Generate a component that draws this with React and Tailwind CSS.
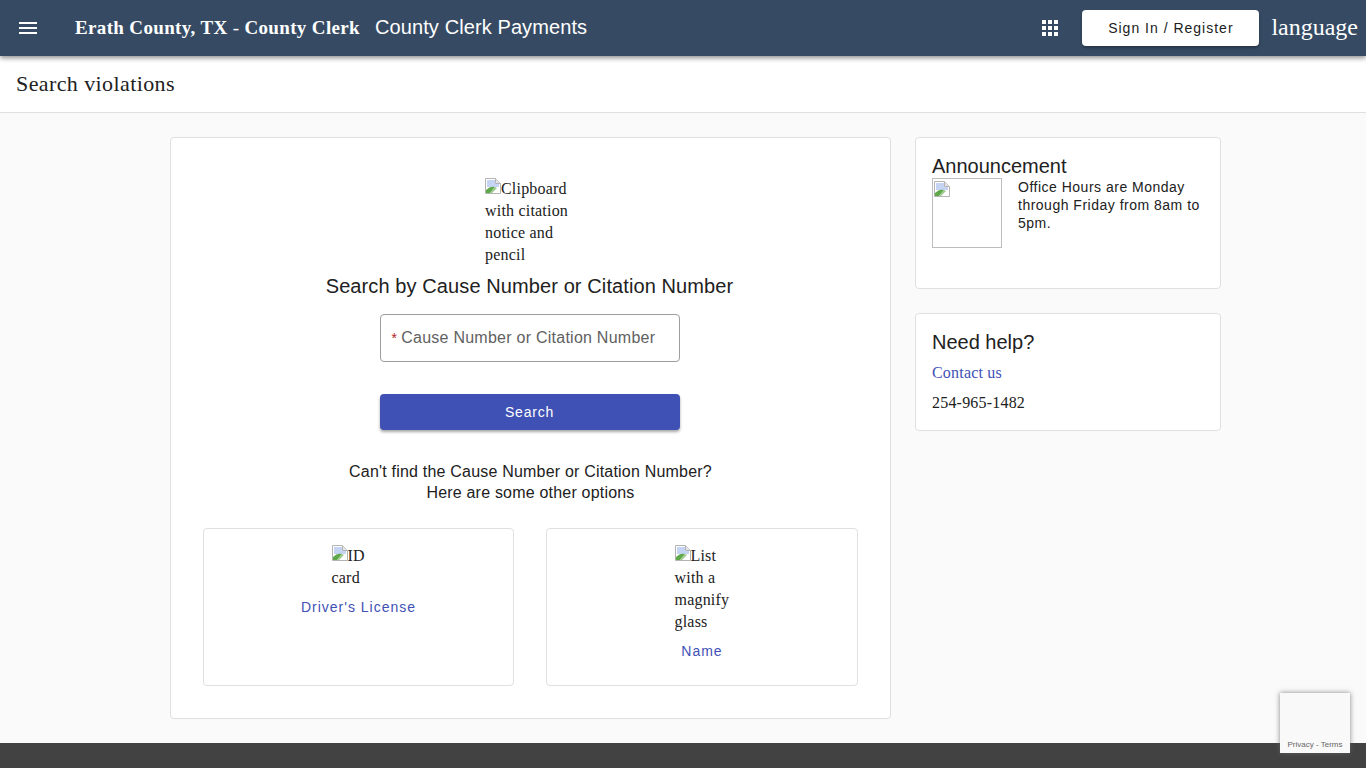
import React from "react";

const serif = { fontFamily: '"Liberation Serif", serif' };

// the icon Chrome draws for an image that failed to load
function BrokenImage() {
  return (
    <svg width="16" height="16" viewBox="0 0 16 16" className="inline-block align-baseline">
      <path d="M0.5 0.5H10.5L15.5 5.5V15.5H0.5Z" fill="#fff" stroke="#b4b4b4" />
      <path d="M10.5 0.5V5.5H15.5" fill="#e4e4e4" stroke="#b4b4b4" />
      <path d="M2 2H10V6H14V9L2 9Z" fill="#c5d4f3" />
      <path d="M1 15V12C4 9 7 8 10 9L5 15Z" fill="#5fa84a" />
      <path d="M5 15L10 9L12 10L7 15Z" fill="#9fc98f" />
    </svg>
  );
}

function AltImage({ alt, className }) {
  return (
    <div className={`font-['Liberation_Serif',serif] text-base leading-[22px] tracking-[0.2px] text-[#212121] text-left ${className}`}>
      <BrokenImage />
      {alt}
    </div>
  );
}

function OptionCard({ alt, imgWidth, label, width }) {
  return (
    <div className={`${width} h-[158px] bg-white border border-[#e0e0e0] rounded flex flex-col items-center pt-[16px]`}>
      <AltImage alt={alt} className={imgWidth} />
      <a className="mt-[7px] text-sm leading-[22px] tracking-[1px] text-[#3f51b5]">{label}</a>
    </div>
  );
}

export default function App() {
  return (
    <div className="min-h-screen bg-[#fafafa] flex flex-col font-['Liberation_Sans',Arial,sans-serif] text-[#212121] relative overflow-hidden">
      <header className="h-14 bg-[#364b63] flex items-center text-white shadow-[0_2px_5px_rgba(0,0,0,0.45)] relative z-10">
        <svg width="24" height="24" viewBox="0 0 24 24" fill="#fff" className="ml-[16px]">
          <path d="M3 18h18v-2H3v2zm0-5h18v-2H3v2zm0-7v2h18V6H3z" />
        </svg>
        <div className="ml-[35px] font-bold text-[19px] tracking-[0.35px] whitespace-nowrap" style={serif}>
          Erath County, TX <span className="font-normal">-</span> County Clerk
        </div>
        <div className="ml-[15px] text-xl tracking-[0.1px] whitespace-nowrap -translate-y-px">County Clerk Payments</div>
        <div className="ml-auto flex items-center">
          <svg width="16" height="16" viewBox="0 0 16 16" fill="#fff" className="mr-[24px]">
            <rect x="0" y="0" width="4" height="4" />
            <rect x="6" y="0" width="4" height="4" />
            <rect x="12" y="0" width="4" height="4" />
            <rect x="0" y="6" width="4" height="4" />
            <rect x="6" y="6" width="4" height="4" />
            <rect x="12" y="6" width="4" height="4" />
            <rect x="0" y="12" width="4" height="4" />
            <rect x="6" y="12" width="4" height="4" />
            <rect x="12" y="12" width="4" height="4" />
          </svg>
          <button className="w-[177px] h-9 bg-white rounded text-sm tracking-[1px] text-[#212121] shadow-[0_2px_3px_rgba(0,0,0,0.3)]">
            Sign In / Register
          </button>
          <div className="ml-[12px] mr-[8px] text-[24px] -translate-y-px" style={serif}>language</div>
        </div>
      </header>

      <div className="h-[57px] bg-white border-b border-[#e0e0e0] flex items-center pl-4 pb-[2px] text-[22px] tracking-[0.4px]" style={serif}>
        Search violations
      </div>

      <main className="flex items-start gap-6 pl-[170px] pt-6 pb-6">
        <section className="w-[721px] h-[582px] bg-white border border-[#e0e0e0] rounded flex flex-col items-center pt-[40px] px-8">
          <AltImage alt="Clipboard with citation notice and pencil" className="w-[85px] -translate-x-[3px]" />
          <h2 className="mt-[6px] text-xl leading-7 tracking-[0.1px] -translate-x-[1px]">Search by Cause Number or Citation Number</h2>
          <div className="mt-[14px] w-[300px] h-12 border border-[#9e9e9e] rounded bg-white flex items-center pl-[11px] text-base tracking-[0.25px] text-[#616161] -translate-x-px">
            <span className="text-[#b71c1c] text-sm mr-[4px]">*</span>
            Cause Number or Citation Number
          </div>
          <button className="mt-8 w-[300px] h-9 bg-[#3f51b5] rounded text-white text-sm font-medium tracking-[0.8px] shadow-[0_2px_3px_rgba(0,0,0,0.35)] -translate-x-px">
            Search
          </button>
          <p className="mt-[31px] text-base leading-[21px] tracking-[0.2px] text-center">
            Can't find the Cause Number or Citation Number?
            <br />
            Here are some other options
          </p>
          <div className="mt-[25px] w-full flex gap-8">
            <OptionCard alt="ID card" imgWidth="w-[54px]" label="Driver's License" width="w-[311px]" />
            <OptionCard alt="List with a magnify glass" imgWidth="w-[55px]" label="Name" width="w-[312px]" />
          </div>
        </section>

        <aside className="w-[306px] flex flex-col gap-6">
          <div className="h-[152px] bg-white border border-[#e0e0e0] rounded pl-4 pr-4 pt-[17px]">
            <h3 className="text-xl leading-[23px]">Announcement</h3>
            <div className="flex">
              <div className="w-[70px] h-[70px] shrink-0 border border-[#bdbdbd] p-px">
                <BrokenImage />
              </div>
              <p className="ml-4 text-sm leading-[18px] tracking-[0.5px]">
                Office Hours are Monday through Friday from 8am to 5pm.
              </p>
            </div>
          </div>
          <div className="h-[118px] bg-white border border-[#e0e0e0] rounded px-4 pt-[16px]">
            <h3 className="text-xl leading-[25px]">Need help?</h3>
            <a className="block mt-[7px] text-base leading-[22px] tracking-[0.2px] text-[#3f51b5]" style={serif}>Contact us</a>
            <div className="mt-2 text-base leading-[22px] tracking-[0.2px]" style={serif}>254-965-1482</div>
          </div>
        </aside>
      </main>

      <footer className="flex-1 bg-[#424242]" />

      {/* recaptcha badge */}
      <div className="absolute left-[1280px] top-[693px] w-[70px] h-[60px] bg-[#f9f9f9] shadow-[0_0_5px_rgba(100,100,100,0.8)] flex items-end justify-center pb-[3px]">
        <span className="text-[8px] leading-[10px] text-[#666] whitespace-nowrap">Privacy - Terms</span>
      </div>
    </div>
  );
}
